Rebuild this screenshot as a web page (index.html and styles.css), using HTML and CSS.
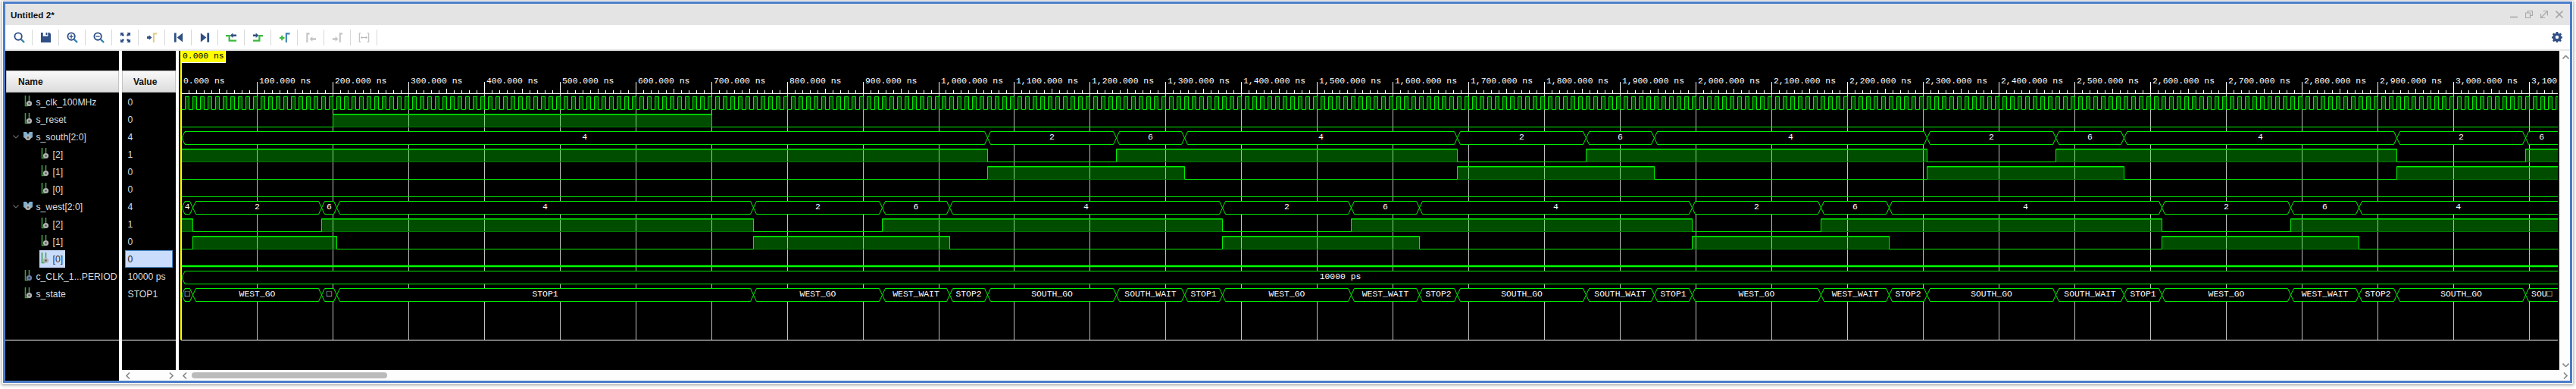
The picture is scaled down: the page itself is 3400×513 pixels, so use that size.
FILE: index.html
```html
<!DOCTYPE html>
<html lang="en">
<head>
    <meta charset="UTF-8">
    <title>Untitled 2*</title>
    <link rel="stylesheet" href="styles.css">
</head>
<body>
    <svg class="defs">
        <defs>
            <symbol id="sig" viewBox="0 0 12 16">
                <path d="M2.5 0V13.5H6" fill="none" stroke="#3f9e45" stroke-width="1.6"/>
                <path d="M7.5 0V7" fill="none" stroke="#5c8f62" stroke-width="1.6"/>
                <circle cx="7.5" cy="10.5" r="3.6" fill="#b4b4b4"/>
                <circle cx="7.5" cy="10.5" r="1.3" fill="#555"/>
            </symbol>
            <symbol id="const" viewBox="0 0 12 16">
                <path d="M2.5 0V13.5H6" fill="none" stroke="#3f9e45" stroke-width="1.6"/>
                <path d="M7.5 0V7" fill="none" stroke="#5c8f62" stroke-width="1.6"/>
                <circle cx="7.5" cy="10.5" r="3.6" fill="#6d7fa8"/>
                <circle cx="7.5" cy="10.5" r="1.3" fill="#333"/>
            </symbol>
            <symbol id="bus" viewBox="0 0 12 16">
                <path d="M0 2H4L6 5L8 2H12V9L9 11H3L0 9Z" fill="#7fb0d0"/>
                <circle cx="6" cy="9.5" r="3.6" fill="#b4b4b4"/>
                <circle cx="6" cy="9.5" r="1.3" fill="#555"/>
            </symbol>
        </defs>
    </svg>

    <div class="window">
        <div class="titlebar">
            <span class="title">Untitled 2*</span>
            <div class="winbtns">
                <svg viewBox="0 0 10 10"><path d="M0 8.5H10" stroke-width="1.6"/></svg>
                <svg viewBox="0 0 10 10"><path d="M3.5 2.5V.5H9.5V6.5H7M.5 3H6.5V9.5H.5Z"/></svg>
                <svg viewBox="0 0 10 10"><path d="M3.5 .5H9.5V6.5M1 9L8.5 1.5M.5 4V9.5H6"/></svg>
                <svg viewBox="0 0 10 10"><path d="M.5 .5L9.5 9.5M9.5 .5L.5 9.5" stroke-width="1.6"/></svg>
            </div>
        </div>

        <div class="toolbar">
            <div class="tool"><svg viewBox="0 0 16 16"><circle cx="6.5" cy="6.5" r="5" fill="none" stroke="#2f4f86" stroke-width="2"/><path d="M10.5 10.5L15 15" stroke="#2f7fb0" stroke-width="2.4"/></svg></div>
            <div class="tool"><svg viewBox="0 0 16 16"><path d="M1 1H4V6H11V1H13L15 3V15H1Z" fill="#2f4f86"/><path d="M8 1H10V4.5H8Z" fill="#2f4f86"/></svg></div>
            <div class="tool"><svg viewBox="0 0 16 16"><circle cx="6.5" cy="6.5" r="5" fill="none" stroke="#2f4f86" stroke-width="2"/><path d="M10.5 10.5L15 15" stroke="#2f7fb0" stroke-width="2.4"/><path d="M3.8 6.5H9.2M6.5 3.8V9.2" stroke="#2f4f86" stroke-width="1.4"/></svg></div>
            <div class="tool"><svg viewBox="0 0 16 16"><circle cx="6.5" cy="6.5" r="5" fill="none" stroke="#2f4f86" stroke-width="2"/><path d="M10.5 10.5L15 15" stroke="#2f7fb0" stroke-width="2.4"/><path d="M3.8 6.5H9.2" stroke="#2f4f86" stroke-width="1.4"/></svg></div>
            <div class="tool"><svg viewBox="0 0 16 16" fill="#2f4f86"><path d="M1 1H6L4.5 2.5L6.5 4.5L4.5 6.5L2.5 4.5L1 6Z"/><path d="M15 1V6L13.5 4.5L11.5 6.5L9.5 4.5L11.5 2.5L10 1Z"/><path d="M1 15V10L2.5 11.5L4.5 9.5L6.5 11.5L4.5 13.5L6 15Z"/><path d="M15 15H10L11.5 13.5L9.5 11.5L11.5 9.5L13.5 11.5L15 10Z"/></svg></div>
            <div class="tool"><svg viewBox="0 0 16 16"><path d="M1 6.5H4V4.5L8 8L4 11.5V9.5H1Z" fill="#2f4f86"/><path d="M15 2.5H10.5V15" fill="none" stroke="#e2cd85" stroke-width="2.2"/></svg></div>
            <div class="tool"><svg viewBox="0 0 16 16" fill="#2f4f86"><path d="M2 1.5H5V14.5H2Z"/><path d="M14 1.5V14.5L6 8Z"/></svg></div>
            <div class="tool"><svg viewBox="0 0 16 16" fill="#2f4f86"><path d="M11 1.5H14V14.5H11Z"/><path d="M2 1.5V14.5L10 8Z"/></svg></div>
            <div class="tool"><svg viewBox="0 0 16 16"><path d="M0 5.5H5V12.5H15" fill="none" stroke="#3cb93c" stroke-width="2.4"/><path d="M6 5L10 1.5V3.8H15V6.5H10V8.5Z" fill="#2f4f86"/></svg></div>
            <div class="tool"><svg viewBox="0 0 16 16"><path d="M1 12.5H10V5.5H15" fill="none" stroke="#3cb93c" stroke-width="2.4"/><path d="M9 5L5 1.5V3.8H1V6.5H5V8.5Z" fill="#2f4f86"/></svg></div>
            <div class="tool"><svg viewBox="0 0 16 16"><path d="M1 8.5H8M4.5 5V12" stroke="#3cb93c" stroke-width="2.2"/><path d="M15.5 2.5H10.5V15" fill="none" stroke="#3a7fb0" stroke-width="2.2"/></svg></div>
            <div class="tool"><svg viewBox="0 0 16 16"><path d="M6 2.5H2.5V15" fill="none" stroke="#c4c4c4" stroke-width="2.2"/><path d="M6 10L10 6.5V8.8H15V11.5H10V13.5Z" fill="#c4c4c4"/></svg></div>
            <div class="tool"><svg viewBox="0 0 16 16"><path d="M1 8.8H5V6.5L9 10L5 13.5V11.5H1Z" fill="#c4c4c4"/><path d="M15 2.5H11.5V15" fill="none" stroke="#c4c4c4" stroke-width="2.2"/></svg></div>
            <div class="tool"><svg viewBox="0 0 16 16"><path d="M3.5 2H1.5V14H3.5M12.5 2H14.5V14H12.5" fill="none" stroke="#c4c4c4" stroke-width="1.4"/><path d="M4 8H12M5.5 6.5L4 8L5.5 9.5M10.5 6.5L12 8L10.5 9.5" fill="none" stroke="#b0b0b0"/></svg></div>
            <svg class="gear" viewBox="0 0 16 16"><path d="M6.6 0H9.4L9.8 2.2L11.4 2.9L13.3 1.6L15 3.6L13.6 5.3L14.2 6.8L16 7V9.6L14.2 9.9L13.5 11.4L14.7 13.2L12.8 15L11.1 13.7L9.7 14.3L9.3 16H6.7L6.3 14.3L4.8 13.7L3.1 15L1.2 13.2L2.4 11.4L1.8 9.9L0 9.6V7L1.8 6.8L2.4 5.3L1 3.6L2.7 1.6L4.6 2.9L6.2 2.2Z" fill="#2f4f86"/><circle cx="8" cy="8" r="2.6" fill="#fff"/></svg>
        </div>

        <div class="main">
            <div class="names">
                <div class="header name-head">Name</div>
                <div class="list">
                    <div class="row"><span class="twist"></span><span class="cell"><svg class="ico"><use href="#sig"/></svg><span>s_clk_100MHz</span></span></div>
                    <div class="row"><span class="twist"></span><span class="cell"><svg class="ico"><use href="#sig"/></svg><span>s_reset</span></span></div>
                    <div class="row"><span class="twist"><svg class="chev" viewBox="0 0 8 5"><path d="M.5 .5L4 4L7.5 .5"/></svg></span><span class="cell"><svg class="ico"><use href="#bus"/></svg><span>s_south[2:0]</span></span></div>
                    <div class="row child"><span class="twist"></span><span class="cell"><svg class="ico"><use href="#sig"/></svg><span>[2]</span></span></div>
                    <div class="row child"><span class="twist"></span><span class="cell"><svg class="ico"><use href="#sig"/></svg><span>[1]</span></span></div>
                    <div class="row child"><span class="twist"></span><span class="cell"><svg class="ico"><use href="#sig"/></svg><span>[0]</span></span></div>
                    <div class="row"><span class="twist"><svg class="chev" viewBox="0 0 8 5"><path d="M.5 .5L4 4L7.5 .5"/></svg></span><span class="cell"><svg class="ico"><use href="#bus"/></svg><span>s_west[2:0]</span></span></div>
                    <div class="row child"><span class="twist"></span><span class="cell"><svg class="ico"><use href="#sig"/></svg><span>[2]</span></span></div>
                    <div class="row child"><span class="twist"></span><span class="cell"><svg class="ico"><use href="#sig"/></svg><span>[1]</span></span></div>
                    <div class="row child"><span class="twist"></span><span class="cell sel"><svg class="ico"><use href="#sig"/></svg><span>[0]</span></span></div>
                    <div class="row"><span class="twist"></span><span class="cell"><svg class="ico"><use href="#const"/></svg><span>c_CLK_1...PERIOD</span></span></div>
                    <div class="row"><span class="twist"></span><span class="cell"><svg class="ico"><use href="#sig"/></svg><span>s_state</span></span></div>
                </div>
                <div class="foot"></div>
            </div>

            <div class="values">
                <div class="header value-head">Value</div>
                <div class="list">
                    <div class="row val">0</div>
                    <div class="row val">0</div>
                    <div class="row val">4</div>
                    <div class="row val">1</div>
                    <div class="row val">0</div>
                    <div class="row val">0</div>
                    <div class="row val">4</div>
                    <div class="row val">1</div>
                    <div class="row val">0</div>
                    <div class="row val sel">0</div>
                    <div class="row val">10000 ps</div>
                    <div class="row val">STOP1</div>
                </div>
                <div class="foot"></div>
                <div class="hscroll spread">
                    <svg class="arrow" viewBox="0 0 6 9"><path d="M5 .5L1 4.5L5 8.5"/></svg>
                    <svg class="arrow" viewBox="0 0 6 9"><path d="M1 .5L5 4.5L1 8.5"/></svg>
                </div>
            </div>

            <div class="wavecol">
                <div class="waverow">
                    <div class="wave"><svg id="waves" viewBox="236 67 3140 382" width="3140" height="382"></svg></div>
                    <div class="vscroll">
                        <svg class="updown" viewBox="0 0 9 5"><path d="M.5 4.5L4.5 .5L8.5 4.5"/></svg>
                        <svg class="updown" viewBox="0 0 9 5"><path d="M.5 .5L4.5 4.5L8.5 .5"/></svg>
                    </div>
                </div>
                <div class="hscroll">
                    <svg class="arrow" viewBox="0 0 6 9"><path d="M5 .5L1 4.5L5 8.5"/></svg>
                    <div class="thumb"></div>
                    <svg class="arrow end" viewBox="0 0 6 9"><path d="M1 .5L5 4.5L1 8.5"/></svg>
                </div>
            </div>
        </div>
    </div>
    <script src="script.js"></script>
</body>
</html>
```

FILE: styles.css
```css
html, body { margin: 0; background: #fff; overflow: hidden; }
body { width: 3400px; height: 513px; font-family: "Liberation Sans", Arial, sans-serif; }
.defs { position: absolute; width: 0; height: 0; }

.window {
    box-sizing: border-box;
    width: 3391px;
    height: 503px;
    margin: 2px 0 0 4px;
    border: 3px solid #4a7cc8;
    box-shadow: 0 0 0 1px #fff, 0 1px 4px 2px #aaa;
    display: flex;
    flex-direction: column;
    background: #fff;
}

.titlebar {
    height: 28px;
    background: #e4e4e4;
    display: flex;
    align-items: center;
    justify-content: space-between;
    flex: none;
}
.title { margin-left: 7px; font-size: 11.7px; font-weight: bold; color: #111; }
.winbtns { display: flex; gap: 10px; margin-right: 9px; }
.winbtns svg { width: 10px; height: 10px; fill: none; stroke: #a8a8a8; stroke-width: 1.2; }

.toolbar {
    height: 32px;
    border-bottom: 2px solid #e8e8e8;
    display: flex;
    align-items: center;
    flex: none;
    padding-left: 1px;
    position: relative;
}
.tool {
    width: 34px;
    height: 21px;
    border-right: 1px solid #d8d8d8;
    display: flex;
    align-items: center;
    justify-content: center;
}
.tool svg { width: 15px; height: 15px; }
.gear { width: 14px; height: 14px; margin-left: auto; margin-right: 10px; }

.main { flex: 1; display: flex; min-height: 0; background: #fff; }

.names, .values { background: #000; display: flex; flex-direction: column; padding-top: 26px; box-sizing: border-box; }
.names { width: 150px; }
.values { width: 71px; margin: 0 4px; }

.header {
    height: 29px;
    box-sizing: border-box;
    background: linear-gradient(#f9f9f9, #dcdcdc);
    border: 1px solid #c4c4c4;
    font-size: 12px;
    font-weight: bold;
    color: #111;
    display: flex;
    align-items: center;
    margin-bottom: 1px;
    flex: none;
}
.name-head { padding-left: 15px; margin-left: 1px; }
.value-head { padding-left: 14px; }

.list { height: 325px; flex: none; }
.row {
    height: 23px;
    display: flex;
    align-items: center;
    font-size: 12.2px;
    color: #ddd;
    box-sizing: border-box;
}
.twist { width: 24px; flex: none; display: flex; justify-content: flex-end; padding-right: 0; }
.row.child .twist { width: 45px; }
.cell { height: 23px; display: flex; align-items: center; padding: 0 3px 0 0; white-space: nowrap; }
.row.child .cell { padding-left: 1px; }
.cell.sel { background: #c9dcfb; color: #333; }
.ico { width: 12px; height: 16px; margin-right: 4.5px; margin-top: -2px; flex: none; }
.chev { width: 8px; height: 5px; fill: none; stroke: #666; stroke-width: 1.1; margin-right: 6px; }

.val { padding-left: 7.5px; }
.val.sel { margin: 0 4px; padding-left: 2.5px; background: #c9dcfb; border: 1px solid #4a90d0; color: #222; }

.foot { border-top: 1px solid #fff; flex: 1; }

.wavecol { flex: 1; display: flex; flex-direction: column; min-width: 0; }
.waverow { flex: 1; display: flex; min-height: 0; }
.wave { flex: 1; background: #000; min-width: 0; }
.wave svg { display: block; }
.vscroll {
    width: 14px;
    background: #fdfdfd;
    display: flex;
    flex-direction: column;
    justify-content: space-between;
    align-items: center;
    padding: 6px 0 4px;
    box-sizing: border-box;
}
.updown { width: 9px; height: 5px; fill: none; stroke: #888; stroke-width: 1.6; margin-left: 2px; }

.hscroll {
    height: 14px;
    flex: none;
    background: #fdfdfd;
    display: flex;
    align-items: center;
    box-sizing: border-box;
    padding: 0 3px 0 5px;
}
.hscroll.spread { justify-content: space-between; padding: 0 3px 0 5px; }
.arrow { width: 6px; height: 9px; fill: none; stroke: #888; stroke-width: 1.6; flex: none; }
.arrow.end { margin-left: auto; }
.thumb { width: 258px; height: 8px; margin-left: 6px; background: #bbb; border-radius: 4px; }

/* waveform drawing */
.grid { stroke: #c0c0c0; stroke-width: 1; }
.axis { stroke: #fff; stroke-width: 1; }
.wire { fill: none; stroke: #0e0; stroke-width: 1; }
.wire-sel { fill: none; stroke: #0f0; stroke-width: 2.4; }
.high { fill: rgba(0, 255, 0, 0.3); stroke: none; }
.high-top { stroke: #00a800; stroke-width: 1; }
.high-bot { stroke: #007a00; stroke-width: 1; }
.bus { fill: #000; stroke: #0e0; stroke-width: 1; }
.cursor { stroke: #ff0; stroke-width: 2; }
.cursor-box { fill: #ff0; stroke: #fff; stroke-width: 1; }
.label { font-family: "Liberation Mono", "DejaVu Sans Mono", monospace; font-size: 11.4px; fill: #fff; }
.label.dark { fill: #000; }
.label.mid { text-anchor: middle; }
```

FILE: script.js
```js
// waveform is drawn from the state timeline, times in ns
const svg = document.getElementById('waves');
const END = 3140;
const RIGHT = 3376;

function px(t) {
    return Math.floor(239.3 + t * 0.9997) + 0.5;
}

function hi(row) { return 127.5 + 23 * row; }
function lo(row) { return 144.5 + 23 * row; }

// build state list: before reset, reset, then 3 and a bit repeats
const segs = [
    [0, 15, 'STOP1', 4],
    [15, 185, 'WEST_GO', 2],
    [185, 205, 'WEST_WAIT', 6],
    [205, 755, 'STOP1', 4]
];
let t = 755;
while (t < END) {
    segs.push([t, t + 170, 'WEST_GO', 2]);
    segs.push([t + 170, t + 260, 'WEST_WAIT', 6]);
    segs.push([t + 260, t + 310, 'STOP2', 4]);
    segs.push([t + 310, t + 480, 'SOUTH_GO', 4]);
    segs.push([t + 480, t + 570, 'SOUTH_WAIT', 4]);
    segs.push([t + 570, t + 620, 'STOP1', 4]);
    t += 620;
}

// south runs the other half of the cycle
const westSegs = [];
const southSegs = [[0, 1065, 4]];
segs.forEach(s => westSegs.push([s[0], s[1], s[3]]));
for (let k = 1065; k < END; k += 620) {
    southSegs.push([k, k + 170, 2]);
    southSegs.push([k + 170, k + 260, 6]);
    southSegs.push([k + 260, k + 620, 4]);
}

function merge(list) {
    const out = [];
    list.forEach(s => {
        const last = out[out.length - 1];
        if (last && last[2] === s[2]) last[1] = s[1];
        else out.push(s.slice());
    });
    return out.filter(s => px(s[0]) < RIGHT);
}

const west = merge(westSegs);
const south = merge(southSegs);
let out = '';

function drawGrid() {
    for (let n = 0; n <= 31; n++) {
        const x = px(n * 100);
        if (x > RIGHT) break;
        out += `<line class="grid" x1="${x}" y1="124" x2="${x}" y2="448"/>`;
        out += `<line class="axis" x1="${x}" y1="108" x2="${x}" y2="124"/>`;
        // the last label runs off the pane
        const label = n === 31 ? '3,100.' : (n * 100).toLocaleString('en-US') + '.000 ns';
        out += `<text class="label" x="${x + 2.5}" y="110">${label}</text>`;
    }
    for (let k = 1; k < 314; k++) {
        if (k % 10 === 0) continue;
        const x = px(k * 10);
        const top = k % 5 === 0 ? 117 : 119;
        out += `<line class="axis" x1="${x}" y1="${top}" x2="${x}" y2="123"/>`;
    }
    out += `<line class="axis" x1="239" y1="123.5" x2="${RIGHT}" y2="123.5"/>`;
}

function drawClock() {
    let d = `M240 ${lo(0)}`;
    for (let k = 0; k < 314; k++) {
        const a = px(k * 10 + 5);
        const b = px(k * 10 + 10);
        if (a > RIGHT) break;
        out += `<rect class="high" x="${a}" y="${hi(0)}" width="${b - a}" height="17"/>`;
        d += `H${a}V${hi(0)}H${b}V${lo(0)}`;
    }
    out += `<path class="wire" d="${d}"/>`;
}

function drawBit(row, spans) {
    let d = '';
    spans.forEach((s, i) => {
        const a = i === 0 ? 240 : px(s[0]);
        const b = Math.min(px(s[1]), RIGHT);
        const y = s[2] ? hi(row) : lo(row);
        if (s[2]) {
            out += `<rect class="high" x="${a}" y="${hi(row)}" width="${b - a}" height="17"/>`;
            out += `<line class="high-top" x1="${a}" y1="${hi(row) + 1}" x2="${b}" y2="${hi(row) + 1}"/>`;
            out += `<line class="high-bot" x1="${a}" y1="${lo(row)}" x2="${b}" y2="${lo(row)}"/>`;
        }
        d += (i === 0 ? `M${a} ${y}` : `V${y}`) + `H${b}`;
    });
    out += `<path class="wire" d="${d}"/>`;
}

function bitOf(list, mask) {
    const spans = [];
    list.forEach(s => {
        const v = s[2] & mask ? 1 : 0;
        const last = spans[spans.length - 1];
        if (last && last[2] === v) last[1] = s[1];
        else spans.push([s[0], s[1], v]);
    });
    return spans;
}

function drawBus(row, spans) {
    const h = hi(row);
    const l = lo(row);
    const m = (h + l) / 2;
    spans.forEach((s, i) => {
        const a = i === 0 ? 240 : px(s[0]);
        const bx = px(s[1]);
        const open = bx > RIGHT;
        const b = open ? RIGHT + 10 : bx;
        const w = 4;
        out += `<polygon class="bus" points="${a},${m} ${a + w},${h} ${b - w},${h} ${b},${m} ${b - w},${l} ${a + w},${l}"/>`;
    });
    spans.forEach((s, i) => {
        const a = i === 0 ? 240 : px(s[0]);
        const b = Math.min(px(s[1]), RIGHT);
        const cx = s[4] || (a + b) / 2;
        if (s[3] !== '') out += `<text class="label mid" x="${cx}" y="${h + 10.5}">${s[3]}</text>`;
    });
}

drawGrid();
drawClock();
drawBit(1, [[0, 200, 0], [200, 700, 1], [700, END, 0]]);
drawBus(2, south.map(s => [s[0], s[1], s[2], String(s[2])]));
drawBit(3, bitOf(south, 4));
drawBit(4, bitOf(south, 2));
drawBit(5, [[0, END, 0]]);
drawBus(6, west.map(s => [s[0], s[1], s[2], String(s[2])]));
drawBit(7, bitOf(west, 4));
drawBit(8, bitOf(west, 2));
out += `<line class="wire-sel" x1="240" y1="351" x2="${RIGHT}" y2="351"/>`;
drawBus(10, [[0, END * 2, 0, '10000 ps', 1769]]);

const states = segs.filter(s => px(s[0]) < RIGHT).map(s => {
    let name = s[2];
    const room = Math.min(px(s[1]), RIGHT) - px(s[0]);
    if (room < 30) name = '\u25A1';
    else if (px(s[1]) > RIGHT) name = 'SOU\u25A1';
    return [s[0], s[1], 0, name];
});
drawBus(11, states);

out += `<line class="axis" x1="239" y1="448.5" x2="${RIGHT}" y2="448.5"/>`;
out += `<line class="cursor" x1="239" y1="67" x2="239" y2="448"/>`;
out += `<rect class="cursor-box" x="239.5" y="66.5" width="58" height="16"/>`;
out += `<text class="label dark" x="241" y="77">0.000 ns</text>`;

svg.innerHTML = out;
```
